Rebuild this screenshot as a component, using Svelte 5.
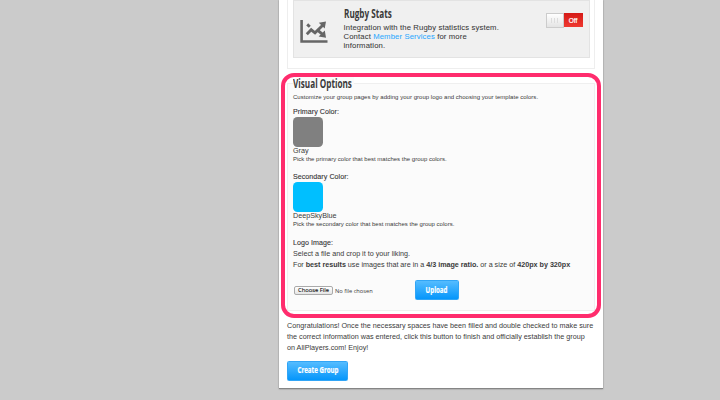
<script>
  const colors = [
    { label: 'Primary Color:', name: 'Gray', value: '#808080', help: 'Pick the primary color that best matches the group colors.' },
    { label: 'Secondary Color:', name: 'DeepSkyBlue', value: '#00bfff', help: 'Pick the secondary color that best matches the group colors.' }
  ];
</script>

<div class="page">
  <main class="sheet">
    <section class="apps">
      <div class="app">
        <svg class="chart" width="28" height="26" viewBox="0 0 28 26">
          <path d="M1.6 1V22.5H27.5" fill="none" stroke="#666" stroke-width="2.6" />
          <path d="M6.8 15.2L11.2 10.8L15 13.8L22.5 6.5" fill="none" stroke="#666" stroke-width="2.9" />
          <path d="M7.2 5.4L9.8 7.8M17.5 11.2L22 14.8" fill="none" stroke="#666" stroke-width="2.9" />
          <path d="M18.8 3.8L26 2.4L24.7 9.6ZM24.8 11.4L26 18.8L18.6 17.6Z" fill="#666" />
        </svg>
        <div class="info">
          <h2><span>Rugby Stats</span></h2>
          <p>Integration with the Rugby statistics system.<br />Contact <a>Member Services</a> for more<br />information.</p>
        </div>
        <div class="toggle"><span class="knob"><i></i><i></i><i></i></span><span class="off">Off</span></div>
      </div>
    </section>

    <section class="options">
      <h2><span>Visual Options</span></h2>
      <p class="desc">Customize your group pages by adding your group logo and choosing your template colors.</p>
      {#each colors as c}
        <div class="color">
          <div class="label">{c.label}</div>
          <div class="swatch" style="background:{c.value}"></div>
          <div class="name">{c.name}</div>
          <div class="help">{c.help}</div>
        </div>
      {/each}
      <div class="label logo">Logo Image:</div>
      <div class="line">Select a file and crop it to your liking.</div>
      <div class="line best">For <b>best results</b> use images that are in a <b>4/3 image ratio.</b> or a size of <b>420px by 320px</b></div>
      <div class="upload">
        <button class="choose">Choose File</button>
        <span class="nofile">No file chosen</span>
        <button class="blue up"><span>Upload</span></button>
      </div>
    </section>

    <p class="congrats">Congratulations! Once the necessary spaces have been filled and double checked to make sure<br />the correct information was entered, click this button to finish and officially establish the group<br />on AllPlayers.com! Enjoy!</p>
    <button class="blue create"><span>Create Group</span></button>
    <div class="highlight"></div>
  </main>
</div>

<style>
  .page { width: 720px; height: 400px; overflow: hidden; background: #cbcbcb; display: flex; font-family: "Liberation Sans", Arial, sans-serif; color: #3a3a3a; font-size: 7.3px; white-space: nowrap; }
  .page * { box-sizing: border-box; }
  p, h2 { margin: 0; }
  button { padding: 0; }
  .sheet { position: relative; margin-left: 279px; width: 324px; height: 389px; background: #fff; padding: 0 8px; border-bottom: 1px solid #858585; box-shadow: 0 0 1.5px #777; }
  .apps { height: 68.5px; border: 1px solid #eee; border-top: 0; padding: 0 4.5px; width: 308px; }
  .app { height: 58px; border: 1px solid #e3e3e3; background: #f0f0f0; display: flex; width: 297px; }
  .chart { margin: 18px 0 0 6.5px; width: 28px; height: 26px; flex: none; }
  .info { margin-left: 15.5px; width: 202px; padding-top: 6px; }
  .info p { font-size: 7.7px; letter-spacing: .13px; line-height: 9px; margin-top: 2px; -webkit-text-stroke: .06px #333; }
  h2 { font: bold 12px/14px "Open Sans", sans-serif; color: #3a3a3a; }
  h2 span { display: inline-block; transform: scaleX(.68); transform-origin: 0 50%; }
  a { color: #2eaaff; -webkit-text-stroke-color: #2eaaff; }
  .toggle { margin-top: 12px; width: 37px; height: 15px; display: flex; align-items: flex-start; }
  .knob { width: 18px; height: 15px; border: 1px solid #ccc; background: linear-gradient(#fff, #e4e4e4); display: flex; justify-content: center; align-items: center; gap: 2px; }
  .knob i { width: 1px; height: 5px; background: #ddd; }
  .off { width: 19px; height: 14px; background: linear-gradient(#d51a17, #ef3930); color: #fff; text-align: center; line-height: 15px; font-size: 6.5px; -webkit-text-stroke: .2px #fff; }
  .options { margin-top: 14.5px; height: 228px; width: 308px; border: 1px solid #efefef; background: #fbfbfb; padding-left: 5px; }
  .options h2 { height: 8px; width: 61px; margin-top: -7px; margin-bottom: 6px; background: #fbfbfb; }
  .desc { font-size: 6px; line-height: 8px; margin-top: 2px; padding-top: 2px; letter-spacing: .03px; }
  .color { height: 65px; padding-top: 5px; }
  .label { font-size: 7.1px; line-height: 12px; color: #333; letter-spacing: .05px; -webkit-text-stroke: .1px #333; }
  .color .label { height: 11px; }
  .swatch { width: 30px; height: 30px; border-radius: 4.5px; }
  .name { line-height: 8px; font-size: 7.2px; }
  .help { line-height: 8px; font-size: 6px; letter-spacing: .01px; }
  .logo { padding-top: 6px; height: 17px; }
  .line { line-height: 11px; font-size: 7.2px; }
  .best { letter-spacing: -.015px; line-height: 12px; height: 11px; }
  .upload { display: flex; height: 20px; margin-top: 10px; align-items: center; }
  .choose { width: 39px; height: 9px; margin: 1px 0 0 1px; border: 1px solid #aaa; border-radius: 2px; background: linear-gradient(#fff, #e5e5e5); font: 5.8px/7px "Open Sans", sans-serif; color: #111; -webkit-text-stroke: .1px #111; }
  .nofile { font: 5.7px/8px "Open Sans", sans-serif; margin: 1px 0 0 2px; width: 80px; }
  .blue { border: 1px solid #31a5f6; border-radius: 1.5px; background: linear-gradient(#55bcff, #0596fb); color: #fff; font: bold 9.3px/15px "Open Sans", sans-serif; display: block; height: 20px; padding-bottom: 2px; }
  .blue span { display: inline-block; transform: scaleX(.66); margin: 0 -12px; -webkit-text-stroke: .2px #fff; }
  .up { width: 44px; }
  .congrats { padding-top: 8.6px; line-height: 11px; font-size: 7.2px; letter-spacing: .01px; }
  .create { width: 61px; margin-top: 8.4px; }
  .highlight { position: absolute; left: 2px; top: 72.5px; width: 320px; height: 245px; border: 4px solid #ff2c6d; border-radius: 13px; }
</style>
